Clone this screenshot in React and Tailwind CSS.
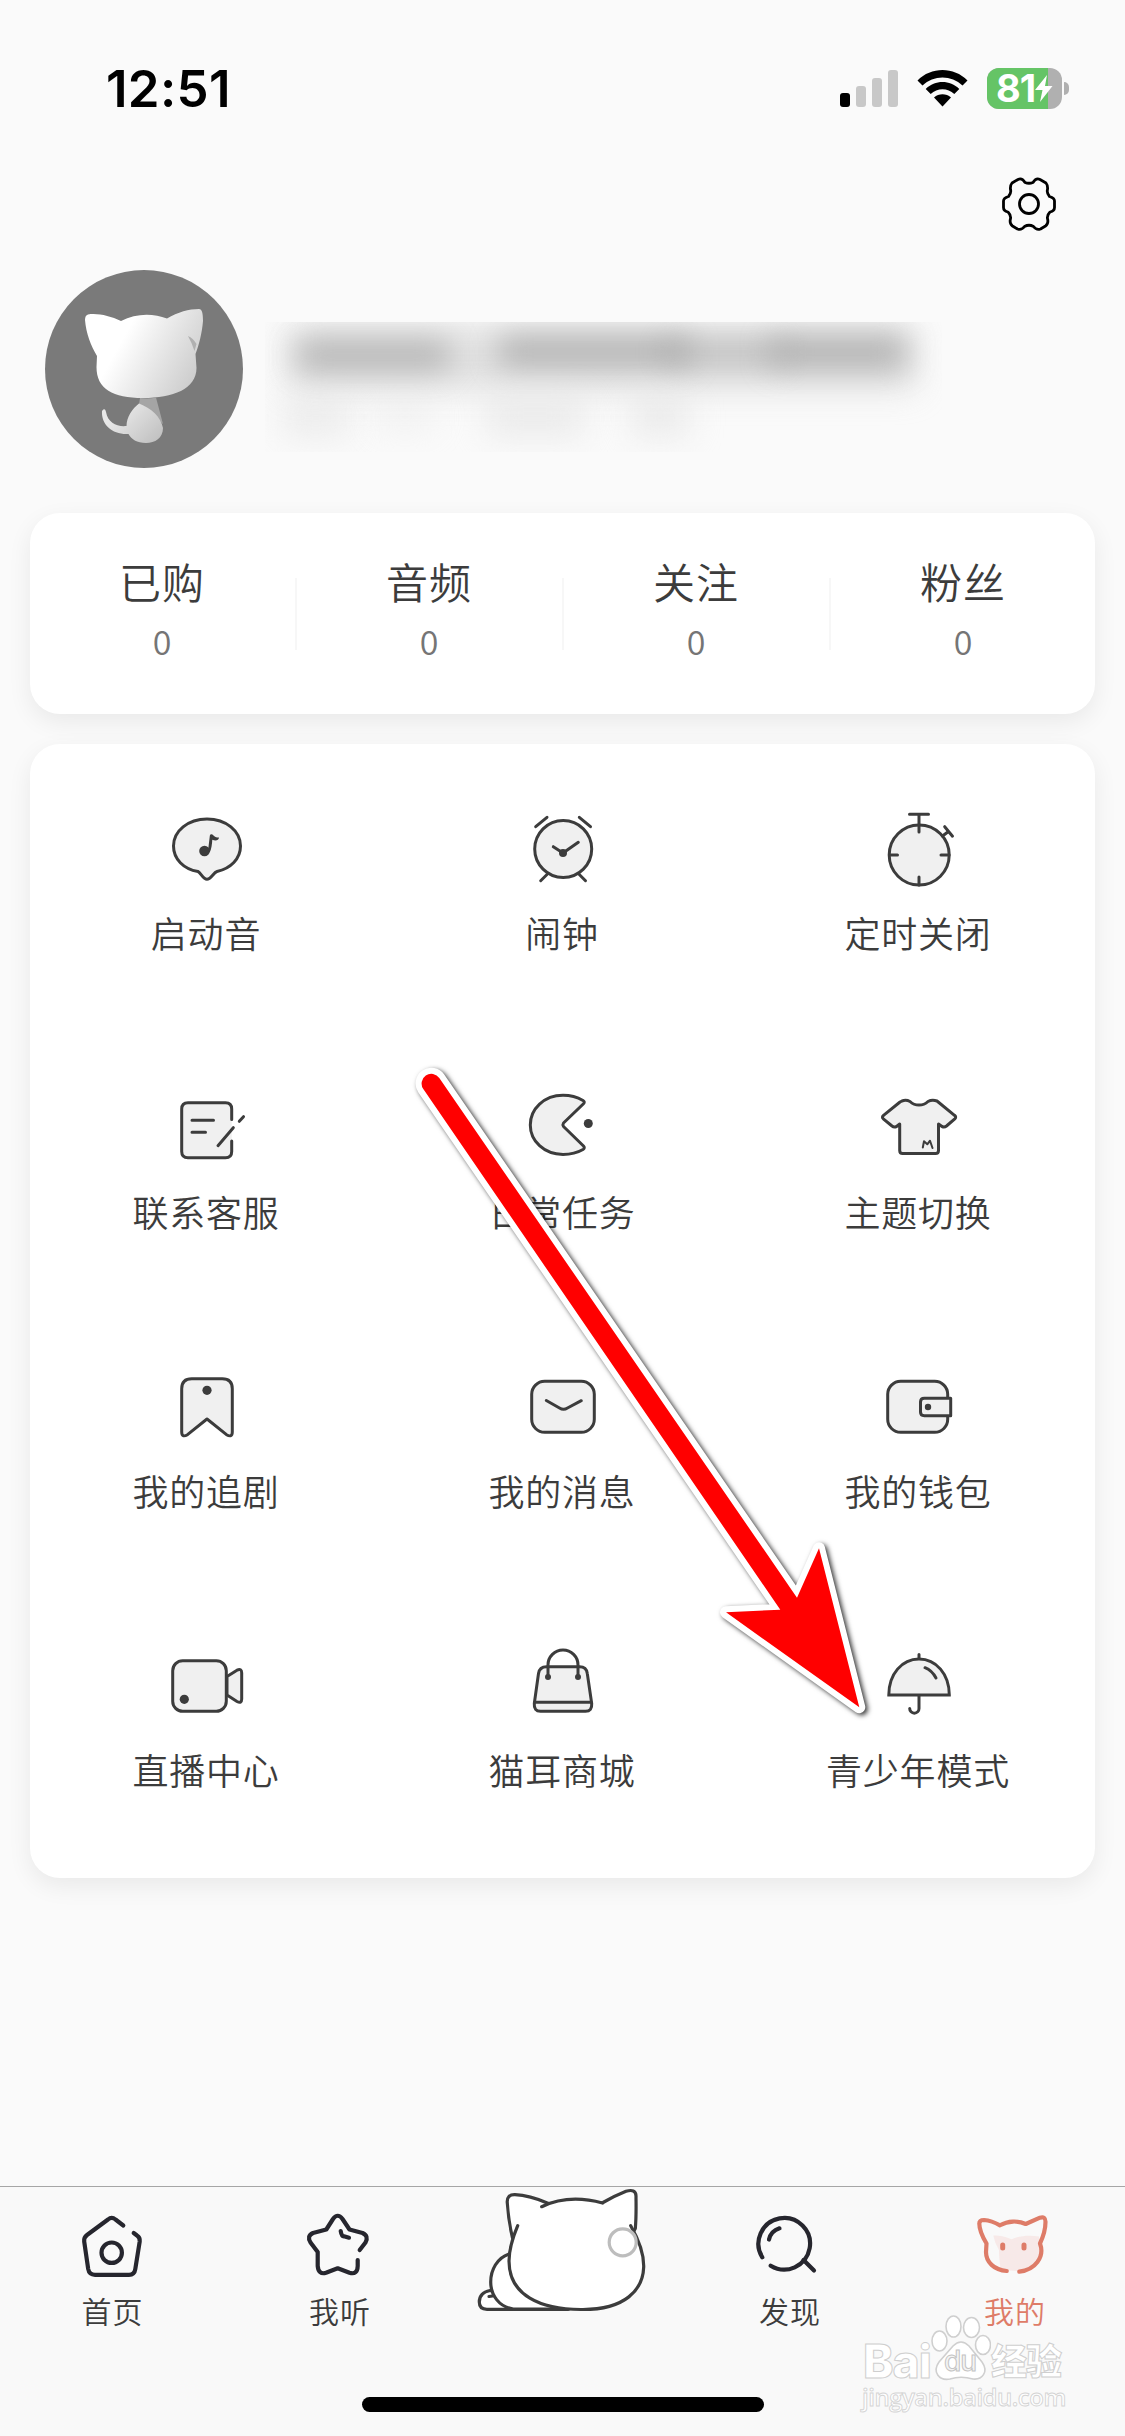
const stats = [
  { label: '已购', value: 0 },
  { label: '音频', value: 0 },
  { label: '关注', value: 0 },
  { label: '粉丝', value: 0 },
];

const NoteIcon = () => (
  <>
    <path d="M50 20C69 20 83.5 32 83.5 47C83.5 60 73.500 69.500 60 72.500C56.500 73.500 54 80.300 50 80.300C46 80.300 43.500 73.500 41 72.500C26.500 70 16.500 60 16.500 47C16.500 32 31 20 50 20Z" />
    <circle cx="47.500" cy="52" r="5.300" fill="#3c3c3c" stroke="none" />
    <path d="M51 52L52.800 37C53 35 55 34.800 56.500 36.500C58 38.300 60 38.500 62 38.500C61.500 42 58 42 55.300 40.700C55 45 54.500 50 52.700 53.500Z" fill="#3c3c3c" stroke="none" />
  </>
);

const AlarmIcon = () => (
  <>
    <circle cx="50.200" cy="50" r="28.500" />
    <path d="M22.700 27.700L34 18.300M66.300 18.300L77.500 27.700M34 75.500L27.700 81.700M66.300 75.500L72.500 81.700M40.300 47.700L50 54L65.300 43.300" fill="none" />
    <circle cx="50" cy="54" r="4" fill="#3c3c3c" stroke="none" />
  </>
);

const StopwatchIcon = () => (
  <>
    <circle cx="50.200" cy="56" r="30" />
    <path d="M40.500 15.300H59.500M50 15.300V33M20.500 56H28.500M72 56H80M50 78V86M75.700 27.700L83.500 37.200M73.500 37L79.500 32.500" fill="none" />
  </>
);

const ServiceIcon = () => (
  <>
    <path d="M24.700 31Q24.700 24.700 31 24.700H68.500Q74.700 24.700 74.700 31V73.500Q74.700 79.700 68.500 79.700H31Q24.700 79.700 24.700 73.500Z" stroke="none" />
    <path d="M74.700 41.500V31Q74.700 24.700 68.500 24.700H31Q24.700 24.700 24.700 31V73.500Q24.700 79.700 31 79.700H68.500Q74.700 79.700 74.700 73.500V63" fill="none" />
    <path d="M35 42.300H56.500M35 54.300H48.500M61 67.700L76.300 49.700M82.300 43.300L86.500 38.700" fill="none" />
  </>
);

const TaskIcon = () => (
  <>
    <path d="M70 22.500Q72.300 24 70.500 25.800L50.500 45Q49.300 46.800 50.500 48.500L70.500 68Q72.300 70 70 71.500C64 75 57 76.400 50 76.400C31 76.400 17.300 63 17.300 47C17.300 31 31 17.300 50 17.300C57 17.300 64 19 70 22.500Z" />
    <circle cx="75.300" cy="45.500" r="4.500" fill="#3c3c3c" stroke="none" />
  </>
);

const ThemeIcon = () => (
  <>
    <path d="M33 23Q37 21.500 41 23.500C46 28.300 54 28.300 59 23.500Q63 21.500 68 23L85.500 37.300Q87.700 39 85.800 40.800L77.500 48Q75.500 49.500 73 48.500L69.500 46V72.500Q69.500 75.500 66.500 75.500H33.700Q30.700 75.500 30.700 72.500V46L27.500 48.500Q25 49.500 23 48L14.300 40.800Q12.500 39 14.500 37.300L31 24Z" />
    <path d="M53.800 69.500L55 63.300L58.300 66.300L61 62.700L63.500 70" fill="none" strokeWidth="2" />
  </>
);

const FollowIcon = () => (
  <>
    <path d="M34.700 21.700H65.300Q75.300 21.700 75.300 31.700V75Q75.300 81 69.500 77.700L50 62L30.500 77.700Q24.700 81 24.700 75V31.700Q24.700 21.700 34.700 21.700Z" />
    <circle cx="50" cy="33.300" r="4.600" fill="#3c3c3c" stroke="none" />
  </>
);

const MessageIcon = () => (
  <>
    <rect x="18.700" y="24.300" width="62.600" height="51" rx="13" />
    <path d="M33.300 43.500L46.500 51Q50.500 53.500 54.500 51L68.300 43.700" fill="none" />
  </>
);

const WalletIcon = () => (
  <>
    <rect x="18.700" y="24.300" width="60" height="51" rx="13" />
    <path d="M81.700 41.300H55.300Q51.500 41.300 51.500 45V55Q51.500 58.700 55.300 58.700H81.700Z" />
    <circle cx="59" cy="50" r="3.200" fill="#3c3c3c" stroke="none" />
  </>
);

const LiveIcon = () => (
  <>
    <path d="M70 40.500L80 34.200Q84.700 32 84.700 37V63Q84.700 68 80 65.500L70 59Z" />
    <rect x="15.700" y="24.700" width="53.600" height="50.600" rx="10" />
    <circle cx="27.300" cy="63.300" r="4.600" fill="#3c3c3c" stroke="none" />
  </>
);

const ShopIcon = () => (
  <>
    <path d="M33.500 30.700H66.500Q73.500 30.700 74.300 37.500L78.700 67.500Q79.300 75.300 72.500 75.300H27.500Q20.700 75.300 21.300 67.500L25.500 37.500Q26.500 30.700 33.500 30.700Z" />
    <path d="M22 66.300H78M35 41V29A15 15 0 0 1 65 29V41" fill="none" />
    <circle cx="35" cy="41" r="3" fill="#3c3c3c" stroke="none" />
    <circle cx="65" cy="41" r="3" fill="#3c3c3c" stroke="none" />
  </>
);

const TeenIcon = () => (
  <>
    <path d="M50 18.500V23M50 59V72.500A4.600 4.600 0 0 1 40.700 72.500" fill="none" />
    <path d="M19.800 59C19.800 38 33 23 50 23C67 23 80.300 38 80.300 59Z" strokeLinejoin="miter" />
    <path d="M56 31.700Q63 34.500 67 42" fill="none" />
  </>
);

const menuItems = [
  { label: '启动音', Icon: NoteIcon },
  { label: '闹钟', Icon: AlarmIcon },
  { label: '定时关闭', Icon: StopwatchIcon },
  { label: '联系客服', Icon: ServiceIcon },
  { label: '日常任务', Icon: TaskIcon },
  { label: '主题切换', Icon: ThemeIcon },
  { label: '我的追剧', Icon: FollowIcon },
  { label: '我的消息', Icon: MessageIcon },
  { label: '我的钱包', Icon: WalletIcon },
  { label: '直播中心', Icon: LiveIcon },
  { label: '猫耳商城', Icon: ShopIcon },
  { label: '青少年模式', Icon: TeenIcon },
];

const StatusBar = () => (
  <div className="flex h-[140px] items-start justify-between pl-[106px] pr-[56px]">
    <span className="mt-[58px] font-['Inter'] text-[51px] font-semibold leading-[62px] tracking-[0.300px] text-black">12:51</span>
    <div className="mt-[68px] flex items-start">
      <svg className="mt-[2px] h-[38px] w-[58px]" viewBox="0 0 58 38">
        <rect x="0" y="23" width="10" height="14" rx="3" fill="#000" />
        <rect x="16" y="16" width="10" height="21" rx="3" fill="#c8c8c8" />
        <rect x="32" y="8" width="10" height="29" rx="3" fill="#c8c8c8" />
        <rect x="48" y="0" width="10" height="37" rx="3" fill="#c8c8c8" />
      </svg>
      <svg className="ml-[19px] mt-[2px] h-[37px] w-[51px]" viewBox="0 0 51 37">
        <path d="M0.500 10.500C14-3.500 37-3.500 50.500 10.500L45.500 15.500C34.500 4.800 16.500 4.800 5.500 15.500Z" />
        <path d="M8.700 19C18 9.800 33 9.800 42.300 19L37.300 24C30.700 17.700 20.300 17.700 13.700 24Z" />
        <path d="M17 27.500C21.800 23.200 29.200 23.200 34 27.500L25.500 36.500Z" />
      </svg>
      <div className="relative ml-[19px] h-[41px] w-[75px]">
        <div className="h-full w-full overflow-hidden rounded-[12px] bg-[#b0b0b0]">
          <div className="h-full w-[61px] bg-[#65c466]" />
        </div>
        <div className="absolute inset-0 flex items-center pl-[9px]">
          <span className="font-['Inter'] text-[38px] font-bold leading-[41px] tracking-[-1px] text-white">81</span>
          <svg className="-ml-[1px] h-[29px] w-[19px] shrink-0" viewBox="0 0 19 29" fill="#fff">
            <path d="M13 1L1 16H8.500L6 28L18.500 12H11Z" />
          </svg>
        </div>
      </div>
      <div className="ml-[2px] mt-[14px] h-[13px] w-[5px] rounded-r-full bg-[#b0b0b0]" />
    </div>
  </div>
);

const Profile = () => (
  <div className="mt-[36px] flex h-[198px] pl-[45px]">
    <svg className="h-[198px] w-[198px] shrink-0" viewBox="45 270 198 198">
      <defs>
        <linearGradient id="head" x1="110" y1="330" x2="200" y2="380" gradientUnits="userSpaceOnUse">
          <stop offset="0.150" stopColor="#fff" />
          <stop offset="1" stopColor="#cacaca" />
        </linearGradient>
        <linearGradient id="body" x1="125" y1="405" x2="160" y2="440" gradientUnits="userSpaceOnUse">
          <stop offset="0" stopColor="#e8e8e8" />
          <stop offset="1" stopColor="#c0c0c0" />
        </linearGradient>
      </defs>
      <circle cx="144" cy="369" r="99" fill="#7a7a7a" />
      <path d="M88 314.500C98 313 110 316 121 321C136 313 153 313 167 318.500C178 312 189 309 199 309C202 309 203 313 203 321C202 333 199 345 195.500 354L196.500 368C196.500 389 173 398 143 398C113 398 96.500 389 96.500 367L97 356C91 346 86 333 85 320C85 317 86 315 88 314.500Z" fill="url(#head)" />
      <path d="M188 336Q193 338 196.500 344L194.500 351Q192 343 188 336Z" fill="#b0b0b0" />
      <path d="M140 398Q149 399 156 397.500L163 424L139 404Z" fill="#a5a5a5" />
      <path d="M102 411C104 408 105.500 409 106 412C108 423 117 427 126.500 426C126.500 417 132 409 139 403.500C151 408 161 417 163 428C163 438 155 443 146 443C137 443 131 439 128.500 434C113 435 101 425 102 411Z" fill="url(#body)" />
    </svg>
    {/* blurred nickname and id */}
    <div className="relative ml-[22px] mt-[52px] h-[130px] w-[677px] overflow-hidden">
      <div className="absolute left-[20px] top-[4px] h-[64px] w-[632px] bg-[#cfcfcf] opacity-60 blur-[16px]" />
      <div className="absolute left-[34px] top-[18px] h-[30px] w-[150px] bg-[#999] opacity-60 blur-[15px]" />
      <div className="absolute left-[234px] top-[14px] h-[30px] w-[190px] bg-[#999] opacity-65 blur-[15px]" />
      <div className="absolute left-[400px] top-[16px] h-[28px] w-[120px] bg-[#999] opacity-45 blur-[15px]" />
      <div className="absolute left-[505px] top-[14px] h-[32px] w-[135px] bg-[#999] opacity-65 blur-[15px]" />
      <div className="absolute left-[16px] top-[76px] h-[40px] w-[70px] bg-[#ddd] opacity-45 blur-[16px]" />
      <div className="absolute left-[110px] top-[80px] h-[30px] w-[60px] bg-[#ddd] opacity-30 blur-[16px]" />
      <div className="absolute left-[220px] top-[76px] h-[40px] w-[100px] bg-[#ddd] opacity-50 blur-[16px]" />
      <div className="absolute left-[365px] top-[76px] h-[40px] w-[60px] bg-[#ddd] opacity-50 blur-[16px]" />
    </div>
  </div>
);

const CenterCat = () => (
  <svg className="h-[126px] w-[175px]" viewBox="0 0 175 126" fill="#fff" stroke="#3c3c3c" strokeWidth="3.200" strokeLinecap="round" strokeLinejoin="round">
    <path d="M15 103.500C7 105 4.300 109.500 4.300 115C4.300 120 7 122.300 12 122.300H93L40 105Z" />
    <path d="M14 109.500L17.500 109" />
    <path d="M34 67C22 71 15.700 83 15.700 95C15.700 108 24 120 38.300 122H94L60 80Z" />
    <path d="M73.500 16.500C62 11.500 50 8 40 7.700C34.500 7.500 31.700 10 32.300 16C33 28 35 40 37.500 51L70 60L150 60L160.300 41.500C161.500 28 161 18 161 9C161 3.500 157 2.500 151 4.300C143 7.500 135 11.500 128 15.500Z" />
    <path d="M66.700 19.700C86 11 107 10.500 127.500 16L155.700 38.700C164 53 169 66 168.700 80C168 103 150 122.500 108 122.500C65 123 34 108 34 74C34 61 38 50 42.700 38.700Z" stroke="none" />
    <path d="M66.700 19.700C86 10.500 107 10.500 127.500 16M155.700 38.700C164 53 169 66 168.700 80C168 103 150 122.500 108 122.500C65 123 34 108 34 74C34 61 38 50 42.700 38.700" fill="none" />
    <circle cx="147.700" cy="55.300" r="13.500" stroke="#bdbdbd" />
  </svg>
);

const tabIconProps = {
  className: 'h-[75px] w-[75px]',
  viewBox: '0 0 75 75',
  fill: 'none',
  stroke: '#26262e',
  strokeWidth: 4.2,
  strokeLinecap: 'round',
  strokeLinejoin: 'round',
};

const TabBar = () => (
  <div className="mt-auto flex h-[250px] flex-col border-t border-[#a6a6a6] bg-[#f9f9f9] text-[30px] font-[350] leading-[36px] tracking-[1px] text-[#3c3c3c]">
    <div className="grid h-[210px] grid-cols-5">
      <div className="flex flex-col items-center pt-[21px]">
        <svg {...tabIconProps}>
          <path d="M48.300 17.500L40.500 11.500Q36.700 8.300 33 11.500L12 27Q8.700 29.500 9.200 33.500L13.200 61Q14.200 66.800 20 66.800H54Q59.500 66.800 60.300 61L64.700 33.500Q65.200 29.500 62 27.500L58.700 25" />
          <circle cx="36.700" cy="44.700" r="10.200" />
        </svg>
        <span className="mt-[9px]">首页</span>
      </div>
      <div className="flex flex-col items-center pt-[21px]">
        <svg {...tabIconProps}>
          <path d="M59.700 42L65.500 34.500Q69 28 62.500 25L49.500 21.500L42.500 11Q37.700 4.500 33 11L26.300 21.500L13 25Q6.500 28 10.500 34.500L17.700 44V58Q18.500 67 26 64.800L37.700 60.300L49.500 64.800Q57.500 67 57.700 58V52" />
          <path d="M40.700 23Q41.500 28.500 44 28.300L49 29.700" />
        </svg>
        <span className="ml-[5px] mt-[9px]">我听</span>
      </div>
      <div className="flex justify-center">
        <CenterCat />
      </div>
      <div className="flex flex-col items-center pt-[21px]">
        <svg {...tabIconProps}>
          <path d="M12.300 49.300A25.800 25.800 0 1 1 20.700 57.700" />
          <path d="M53.500 52L64 62.500M19 31.500Q21 23 29.500 20.300" />
        </svg>
        <span className="ml-[5px] mt-[9px]">发现</span>
      </div>
      <div className="flex flex-col items-center pt-[21px] text-[#de7c68]">
        <svg {...tabIconProps} stroke="#de7c68">
          <path d="M18.300 27.500C26 27.500 31 29 36.700 31.300C44 27.500 56 27 64 28.500L65 48C61 57 53 62 44 63L25.700 62Q24 50 24 42Q20 36 18.300 27.500Z" fill="#f7e9e8" stroke="none" />
          <path d="M31.700 63C19 62 11 54 11 44L11.500 35.500C7 28 4.300 21 4.300 15.500Q4.300 12 9 12C15 12.500 20 14.500 25 17.300C33 12.500 43 12.500 50.700 16L65 9.700Q70.500 8 70.500 13.700C70.500 21 68.500 28 65 35.500C70 49 60 62 44.300 63.700" />
          <path d="M27.700 37V40M49 37V40" strokeWidth="5" />
        </svg>
        <span className="ml-[5px] mt-[9px]">我的</span>
      </div>
    </div>
    <div className="mx-auto h-[15px] w-[402px] rounded-full bg-black" />
  </div>
);

const Arrow = () => (
  <svg className="pointer-events-none absolute left-[400px] top-[1050px] h-[690px] w-[490px]" viewBox="400 1050 490 690">
    <defs>
      <filter id="arrowShadow" x="-10%" y="-10%" width="120%" height="120%" colorInterpolationFilters="sRGB">
        <feDropShadow dx="2.500" dy="2" stdDeviation="2.800" floodColor="#000" floodOpacity="0.800" />
      </filter>
    </defs>
    <g filter="url(#arrowShadow)">
      <path
        d="M423.300 1089A9.700 9.700 0 0 1 439.300 1078L797 1597.700L819 1548.300L859.300 1707.300L726 1612.300L780.300 1609.700Z"
        fill="#fff"
        stroke="#fff"
        strokeWidth="12"
        strokeLinejoin="round"
      />
    </g>
    <path d="M423.300 1089A9.700 9.700 0 0 1 439.300 1078L797 1597.700L819 1548.300L859.300 1707.300L726 1612.300L780.300 1609.700Z" fill="#f00" />
  </svg>
);

const Watermark = () => (
  <div className="pointer-events-none absolute left-[863px] top-[2314px] w-[206px] text-white [-webkit-text-stroke:1px_#cfcfcf]">
    <div className="flex h-[68px] items-end">
      <span className="w-[68px] font-['Inter'] text-[46px] font-extrabold leading-[42px] tracking-[-1px]">Bai</span>
      <div className="relative h-[68px] w-[60px]">
        <svg className="h-[68px] w-[60px]" viewBox="0 0 60 68" fill="#fff" stroke="#cfcfcf" strokeWidth="1.600">
          <ellipse cx="8.500" cy="27" rx="7.500" ry="10" />
          <ellipse cx="22.500" cy="12.500" rx="7.500" ry="10.500" />
          <ellipse cx="40.500" cy="13.500" rx="8" ry="10" />
          <ellipse cx="52" cy="31" rx="7.500" ry="9.500" />
          <path d="M22 32Q30 24 38 32L51 48C58 58 51 66 42 65C33 62.500 27 62.500 19 65C8 67 1 58 8 48Z" />
        </svg>
        <span className="absolute left-[13px] top-[32px] font-['Inter'] text-[28px] font-medium leading-[30px] tracking-[-1px] text-[#f4f4f4] [-webkit-text-stroke:1px_#c4c4c4]">du</span>
      </div>
      <span className="text-[36px] font-black leading-[46px] tracking-[-1px]">经验</span>
    </div>
    <div className="-ml-[1px] font-['Open_Sans'] text-[24px] font-semibold leading-[30px] tracking-[-0.500px] [-webkit-text-stroke:0.900px_#d4d4d4]">jingyan.baidu.com</div>
  </div>
);

const App = () => (
  <div className="relative flex h-[2436px] w-[1125px] flex-col overflow-hidden bg-[#fafafa] font-['Noto_Sans_CJK_SC',sans-serif]">
    <StatusBar />
    <div className="mt-[36px] flex h-[58px] justify-end pr-[66px]">
      <svg className="h-[58px] w-[60px]" viewBox="0 0 60 58" fill="none" stroke="#000" strokeWidth="2.800" strokeLinejoin="round">
        <path d="M26 6.500Q30 8 34 6.500Q37 1.500 41 3.500L47 7Q49 9.500 48.500 13.500Q47.500 17 50.500 20.500Q55.500 22 55.500 25V31.500Q55.500 35 51 36Q47.500 39.500 48.700 43.500Q49.500 48 46.500 50L41.500 53Q37.500 54.500 34.500 50.500Q30 48 25.500 50.500Q22.500 54.500 18.500 53L13.500 50Q10.500 48 11.300 43.500Q12.500 39.500 9 36Q4.500 35 4.500 31.500V25Q4.500 22 9.500 20.500Q12.500 17 11.500 13.500Q11 9.500 13 7L19 3.500Q23 1.500 26 6.500Z" />
        <circle cx="30" cy="28" r="9.500" />
      </svg>
    </div>
    <Profile />
    <div className="mx-[30px] mt-[45px] grid h-[201px] shrink-0 grid-cols-[267px_267px_267px_267px] justify-center rounded-[30px] bg-white shadow-[0_8px_24px_rgba(0,0,0,0.070)]">
      {stats.map((item, i) => (
        <div key={item.label} className="relative flex flex-col items-center pt-[43px]">
          <span className="text-[42px] font-[350] leading-[50px] tracking-[1px] text-[#3c3c3c]">{item.label}</span>
          <span className="mt-[15px] text-[34px] font-[350] leading-[40px] text-[#757575]">{item.value}</span>
          {i < 3 && <div className="absolute -right-[1px] top-[65px] h-[72px] w-[2px] bg-[#f7f7f7]" />}
        </div>
      ))}
    </div>
    <div className="mx-[30px] mt-[30px] grid h-[1134px] shrink-0 auto-rows-[279px] grid-cols-[356px_356px_356px] justify-center rounded-[30px] bg-white pt-[55px] shadow-[0_8px_24px_rgba(0,0,0,0.070)]">
      {menuItems.map(({ label, Icon }) => (
        <div key={label} className="flex flex-col items-center">
          <svg className="h-[100px] w-[100px]" viewBox="0 0 100 100" fill="#f0f0f0" stroke="#3c3c3c" strokeWidth="3" strokeLinecap="round" strokeLinejoin="round">
            <Icon />
          </svg>
          <span className="mr-[1px] mt-[12px] text-[36px] font-[350] leading-[42px] tracking-[0.800px] text-[#3c3c3c]">{label}</span>
        </div>
      ))}
    </div>
    <TabBar />
    <Watermark />
    <Arrow />
  </div>
);

export default App;
